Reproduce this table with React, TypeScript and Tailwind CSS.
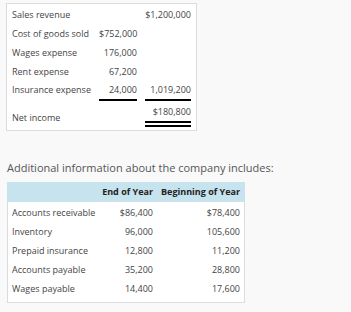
export default function App() {
  const income = [
    { label: "Sales revenue", a: "", b: "$1,200,000" },
    { label: "Cost of goods sold", a: "$752,000", b: "" },
    { label: "Wages expense", a: "176,000", b: "" },
    { label: "Rent expense", a: "67,200", b: "" },
  ];

  const balances = [
    { label: "Accounts receivable", end: "$86,400", begin: "$78,400" },
    { label: "Inventory", end: "96,000", begin: "105,600" },
    { label: "Prepaid insurance", end: "12,800", begin: "11,200" },
    { label: "Accounts payable", end: "35,200", begin: "28,800" },
    { label: "Wages payable", end: "14,400", begin: "17,600" },
  ];

  return (
    <div
      className="min-h-screen bg-[#f9f9f9] pt-[3px] text-[#444]"
      style={{ fontFamily: '"Open Sans", "Liberation Sans", sans-serif' }}
    >
      {/* income statement */}
      <div className="ml-[6px] w-[191px] border border-[#dcdcdc] bg-white px-[5px] pt-[1px] text-[9px]">
        {income.map((r) => (
          <div key={r.label} className="grid h-[19px] grid-cols-[87px_38px_8px_46px] items-center">
            <span>{r.label}</span>
            <span className="text-right">{r.a}</span>
            <span />
            <span className="text-right">{r.b}</span>
          </div>
        ))}
        <div className="grid h-[20px] grid-cols-[87px_38px_8px_46px]">
          <span className="flex h-[18px] items-center">Insurance expense</span>
          <span className="flex h-[20px] items-center justify-end border-b-2 border-black pb-[1px]">24,000</span>
          <span />
          <span className="flex h-[20px] items-center justify-end border-b-2 border-black pb-[1px]">1,019,200</span>
        </div>
        <div className="grid grid-cols-[87px_38px_8px_46px] pb-[3px]">
          <span className="pt-[9px] leading-[15px]">Net income</span>
          <span />
          <span />
          <span className="border-b-[6px] border-double border-black pt-[3px] pb-[2px] text-right leading-[15px]">
            $180,800
          </span>
        </div>
      </div>

      <p className="ml-[7px] mt-[29px] text-[11px] leading-[15px] text-[#555]">
        Additional information about the company includes:
      </p>

      {/* balances table */}
      <div className="ml-[7px] mt-[7px] w-[238px] border-x border-b border-[#dcdcdc] bg-white pb-[4px] text-[9px]">
        <div className="-mx-px grid h-[20px] grid-cols-[5px_90px_51px_87px_5px] items-center bg-[#c6e3ee] font-bold text-[#222]">
          <span />
          <span />
          <span className="text-right">End of Year</span>
          <span className="text-right">Beginning of Year</span>
          <span />
        </div>
        <div className="pt-[1px]">
          {balances.map((r) => (
            <div key={r.label} className="grid h-[19px] grid-cols-[4px_90px_51px_87px_4px] items-center">
              <span />
              <span>{r.label}</span>
              <span className="text-right">{r.end}</span>
              <span className="text-right">{r.begin}</span>
              <span />
            </div>
          ))}
        </div>
      </div>
    </div>
  );
}
